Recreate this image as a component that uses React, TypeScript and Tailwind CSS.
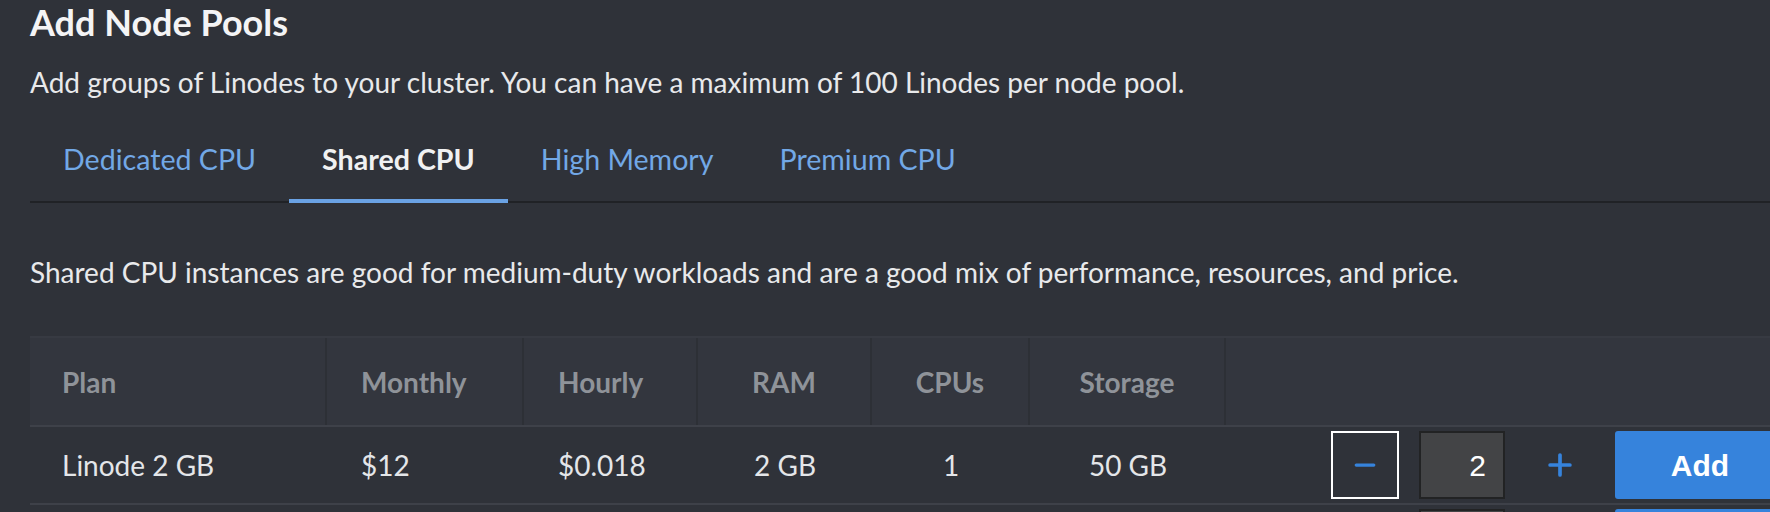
import { Minus, Plus } from "lucide-react";

type PlanRow = {
  plan: string;
  monthly: string;
  hourly: string;
  ram: string;
  cpus: string;
  storage: string;
  count: number;
};

const tabs = ["Dedicated CPU", "Shared CPU", "High Memory", "Premium CPU"];

const rows: PlanRow[] = [
  { plan: "Linode 2 GB", monthly: "$12", hourly: "$0.018", ram: "2 GB", cpus: "1", storage: "50 GB", count: 2 },
  { plan: "Linode 4 GB", monthly: "$24", hourly: "$0.036", ram: "4 GB", cpus: "2", storage: "80 GB", count: 0 },
];

// largeurs des colonnes, relevées sur la capture
const grid = "grid grid-cols-[297px_197px_174px_174px_158px_196px_1fr]";

function Stepper({ count }: { count: number }) {
  const canRemove = count > 0;
  return (
    <div className="flex h-full items-center pl-[105px]">
      <button
        type="button"
        disabled={!canRemove}
        className={`flex h-[68px] w-[68px] items-center justify-center border-2 text-[#3683dc] ${
          canRemove ? "border-white" : "border-transparent opacity-40"
        }`}
      >
        <Minus className="h-[30px] w-[30px]" strokeWidth={2.6} />
      </button>
      <div className="ml-[20px] flex h-[68px] w-[86px] items-center justify-end border-2 border-[#222324] bg-[#434446] pr-[17px] font-['Liberation_Sans',Arial,sans-serif] text-[30px] text-white">
        {count}
      </div>
      <button type="button" className="ml-[21px] flex h-[68px] w-[68px] items-center justify-center text-[#3683dc]">
        <Plus className="h-[34px] w-[34px]" strokeWidth={2.6} />
      </button>
      <button
        type="button"
        className="ml-[21px] h-[68px] w-[170px] shrink-0 rounded-[3px] bg-[#3683dc] font-['Liberation_Sans',Arial,sans-serif] text-[30px] font-bold text-white"
      >
        Add
      </button>
    </div>
  );
}

export default function App() {
  const active = "Shared CPU";

  return (
    <div className="h-[512px] w-full overflow-hidden bg-[#2f3239] pl-[30px] font-[Lato,sans-serif]">
      <h2 className="text-[36px] font-bold leading-[44px] text-[#f4f4f5]">Add Node Pools</h2>
      <p className="mt-[18px] text-[28px] leading-[40px] text-[#e8e9eb]">
        Add groups of Linodes to your cluster. You can have a maximum of 100 Linodes per node pool.
      </p>

      <div className="flex h-[101px] border-b-2 border-[#202226]">
        {tabs.map((tab) => {
          const isActive = tab === active;
          return (
            <button
              key={tab}
              type="button"
              className={`relative flex items-end px-[33px] pb-[22px] text-[28.6px] leading-[40px] ${
                isActive ? "font-bold text-[#f0f1f2]" : "text-[#72a8e6]"
              }`}
            >
              {tab}
              {isActive && <span className="absolute -bottom-[2px] left-0 right-0 h-[4px] bg-[#6aa2e4]" />}
            </button>
          );
        })}
      </div>

      <p className="mt-[49px] text-[28px] leading-[40px] text-[#e8e9eb]">
        Shared CPU instances are good for medium-duty workloads and are a good mix of performance, resources, and
        price.
      </p>

      <div className="mt-[44px] w-[1800px] text-[28px]">
        <div className={`${grid} h-[91px] border-y-2 border-t-[#373a42] border-b-[#3e4149] bg-[#33363e] font-bold text-[#8f9399]`}>
          <div className="flex items-center border-r-2 border-[#2d3036] pl-[32px]">Plan</div>
          <div className="flex items-center border-r-2 border-[#2d3036] pl-[34px]">Monthly</div>
          <div className="flex items-center border-r-2 border-[#2d3036] pl-[34px]">Hourly</div>
          <div className="flex items-center justify-center border-r-2 border-[#2d3036]">RAM</div>
          <div className="flex items-center justify-center border-r-2 border-[#2d3036]">CPUs</div>
          <div className="flex items-center justify-center border-r-2 border-[#2d3036]">Storage</div>
          <div />
        </div>

        {rows.map((row) => (
          <div key={row.plan} className={`${grid} h-[78px] border-b-2 border-[#3e4149] text-[#e4e6e9]`}>
            <div className="flex items-center pl-[32px]">{row.plan}</div>
            <div className="flex items-center pl-[34px]">{row.monthly}</div>
            <div className="flex items-center pl-[34px]">{row.hourly}</div>
            <div className="flex items-center justify-center">{row.ram}</div>
            <div className="flex items-center justify-center">{row.cpus}</div>
            <div className="flex items-center justify-center">{row.storage}</div>
            <Stepper count={row.count} />
          </div>
        ))}
      </div>
    </div>
  );
}
